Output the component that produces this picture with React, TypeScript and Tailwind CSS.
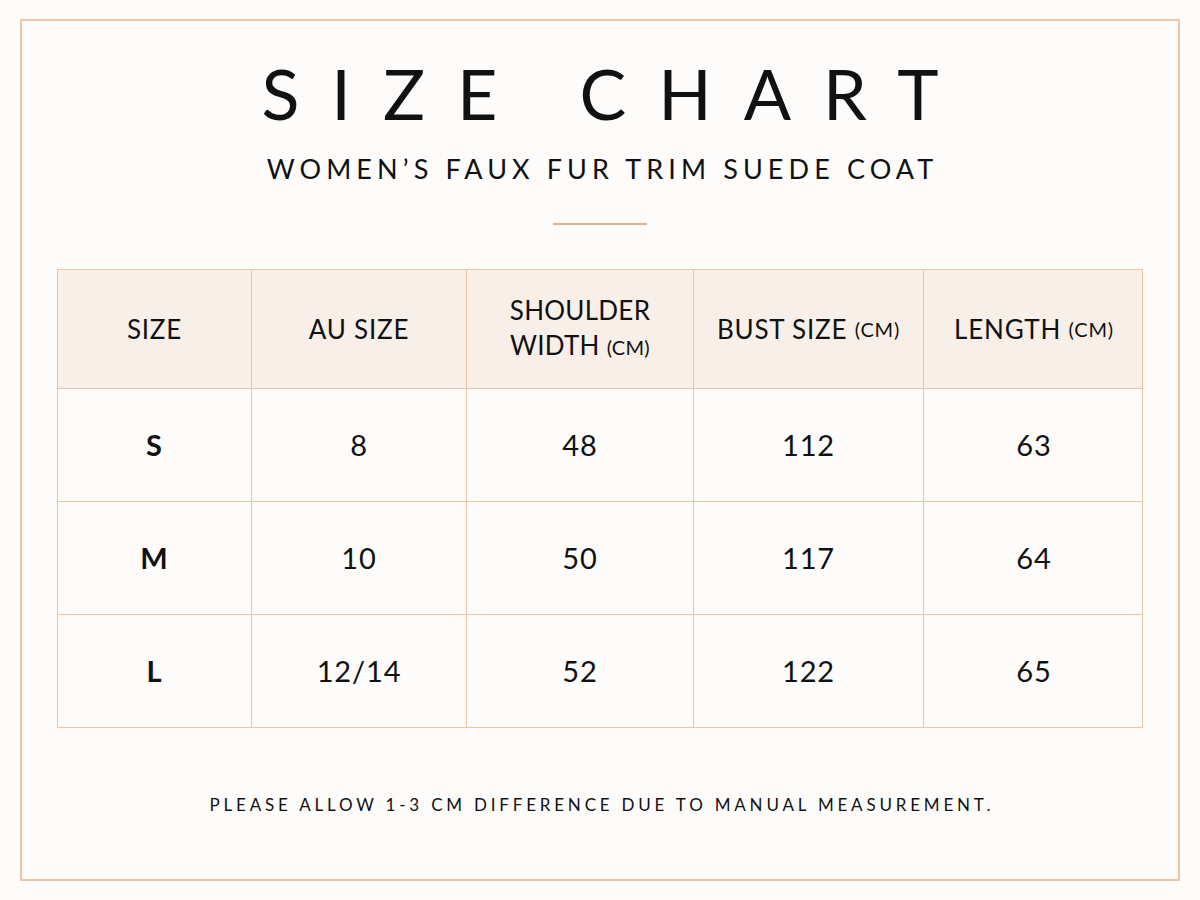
import React from "react";

const rows = [
  { size: "S", au: "8", shoulder: "48", bust: "112", length: "63" },
  { size: "M", au: "10", shoulder: "50", bust: "117", length: "64" },
  { size: "L", au: "12/14", shoulder: "52", bust: "122", length: "65" },
];

const cols = "grid grid-cols-[194px_215px_227px_230px_220px]";

export default function App() {
  return (
    <div
      className="w-[1200px] h-[900px] bg-[#fdfcfa] pt-[19px] px-[20px]"
      style={{ fontFamily: "Lato, 'Noto Sans', sans-serif" }}
    >
      <div className="h-[862px] border-2 border-[#f0c7a6] flex flex-col items-center text-[#111]">
        <h1 className="mt-[32px] text-[70px] leading-[80px] tracking-[32px] pl-[32px] font-normal">
          SIZE CHART
        </h1>
        <h2 className="mt-[19px] text-[27px] leading-[34px] tracking-[5.1px] pl-[5.1px] font-normal">
          WOMEN’S FAUX FUR TRIM SUEDE COAT
        </h2>
        <div className="mt-[37px] w-[94px] h-[2px] bg-[#e6b08a]" />

        <div className="mt-[44px] border border-[#efc4a0] w-[1086px]">
          <div className={`${cols} bg-[#f8efe8] h-[118px] text-[26px] leading-[35px] tracking-[0.03em]`}>
            <div className="flex items-center justify-center border-r border-[#efc4a0]">SIZE</div>
            <div className="flex items-center justify-center border-r border-[#efc4a0]">AU SIZE</div>
            <div className="flex flex-col items-center justify-center border-r border-[#efc4a0] tracking-[0.01em]">
              <span>SHOULDER</span>
              <span>
                WIDTH <span className="text-[20px]">(CM)</span>
              </span>
            </div>
            <div className="flex items-center justify-center border-r border-[#efc4a0]">
              BUST SIZE&nbsp;<span className="text-[20px]">(CM)</span>
            </div>
            <div className="flex items-center justify-center">
              LENGTH&nbsp;<span className="text-[20px]">(CM)</span>
            </div>
          </div>
          {rows.map((r) => (
            <div
              key={r.size}
              className={`${cols} h-[113px] border-t border-[#efc4a0] bg-[#fdfcfa] text-[29px] tracking-[0.03em]`}
            >
              <div className="flex items-center justify-center border-r border-[#efc4a0] font-bold">{r.size}</div>
              <div className="flex items-center justify-center border-r border-[#efc4a0]">{r.au}</div>
              <div className="flex items-center justify-center border-r border-[#efc4a0]">{r.shoulder}</div>
              <div className="flex items-center justify-center border-r border-[#efc4a0]">{r.bust}</div>
              <div className="flex items-center justify-center">{r.length}</div>
            </div>
          ))}
        </div>

        <p className="mt-[64px] text-[17px] tracking-[3.8px] pl-[3.8px]">
          PLEASE ALLOW 1-3 CM DIFFERENCE DUE TO MANUAL MEASUREMENT.
        </p>
      </div>
    </div>
  );
}
